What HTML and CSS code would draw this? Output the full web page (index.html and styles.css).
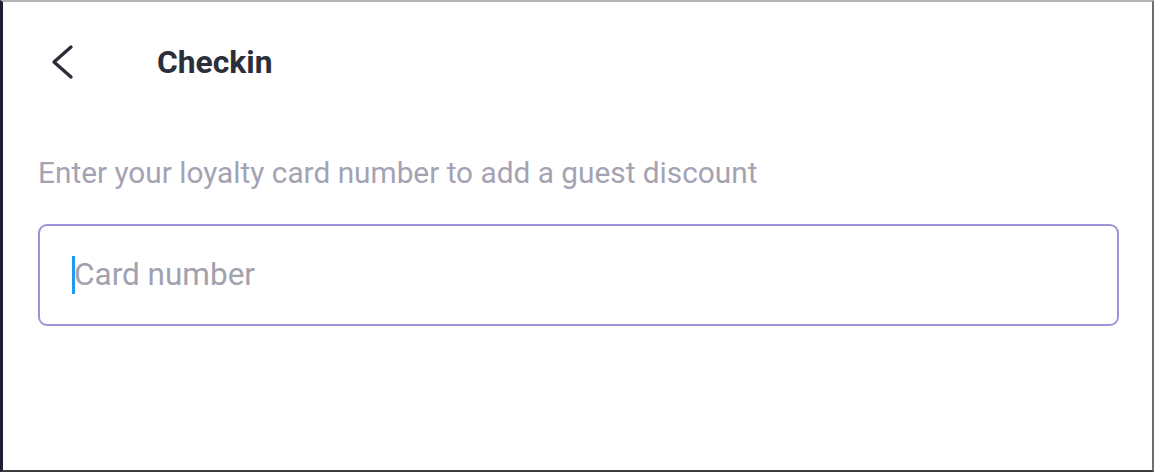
FILE: index.html
```html
<!DOCTYPE html>
<html>
<head>
<meta charset="utf-8">
<link rel="stylesheet" href="styles.css">
</head>
<body>
<div class="frame">
  <header class="header">
    <button class="back" aria-label="Back">
      <svg width="24" height="36" viewBox="0 0 24 36"><path d="M21 3 L4 18 L21 33" fill="none" stroke="#2b2d38" stroke-width="3.4" stroke-linecap="round" stroke-linejoin="round"/></svg>
    </button>
    <h1 class="title">Checkin</h1>
  </header>
  <main class="content">
    <p class="hint">Enter your loyalty card number to add a guest discount</p>
    <div class="field">
      <span class="caret"></span>
      <span class="placeholder">Card number</span>
    </div>
  </main>
</div>
</body>
</html>
```
FILE: styles.css
```css
html, body { margin: 0; padding: 0; background: #fff; }
body { width: 1154px; height: 472px; overflow: hidden; font-family: Roboto, "Noto Sans", sans-serif; }
.frame {
  box-sizing: border-box;
  width: 1154px; height: 472px;
  border-left: 3px solid #1d2033;
  border-top: 2px solid #b4b4b4;
  border-right: 2px solid #6e6e6e;
  border-bottom: 2px solid #3c3c3c;
  background: #fff;
}
.header { display: flex; align-items: center; height: 120px; padding-left: 47px; }
.back { background: none; border: 0; padding: 0; width: 24px; height: 36px; display: flex; }
.title { margin: 0 0 0 83px; font-size: 31.8px; font-weight: 700; color: #2b2e3b; line-height: 40px; }
.content { padding: 0 33px 0 35px; }
.hint { margin: 31px 0 0; font-size: 29.8px; color: #a4a3b3; line-height: 40px; }
.field {
  margin-top: 31px;
  height: 102px; box-sizing: border-box;
  border: 2px solid #9d93d6; border-radius: 9px;
  display: flex; align-items: center; padding-left: 32px;
}
.caret { width: 3px; height: 38px; background: #1e9bf0; margin-top: 0; }
.placeholder { font-size: 31.5px; color: #a2a1ae; margin-left: -1px; margin-top: -2px; }
```
